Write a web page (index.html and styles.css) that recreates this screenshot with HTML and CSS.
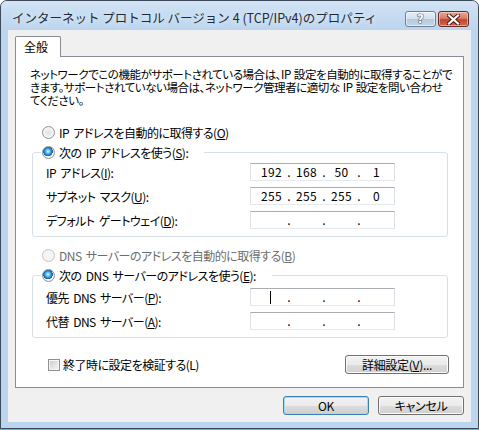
FILE: index.html
```html
<!DOCTYPE html>
<html lang="ja">
<head>
<meta charset="utf-8">
<title>IPv4 のプロパティ</title>
<link rel="stylesheet" href="styles.css">
</head>
<body>
<div class="window">
  <div class="titlebar">
    <span class="title">インターネット プロトコル バージョン 4 (TCP/IPv4)のプロパティ</span>
    <div class="tbtns">
      <div class="tbtn help"><span class="qmark">?</span></div>
      <div class="tbtn close">
        <svg width="13" height="11" viewBox="0 0 13 11">
          <path d="M2 1.5 L11 9.5 M11 1.5 L2 9.5" stroke="#4a1a12" stroke-width="4.2" stroke-linecap="square" fill="none"/>
          <path d="M2 1.5 L11 9.5 M11 1.5 L2 9.5" stroke="#ffffff" stroke-width="2.2" stroke-linecap="square" fill="none"/>
        </svg>
      </div>
    </div>
  </div>
  <div class="client">
    <div class="tabs"><div class="tab">全般</div></div>
    <div class="page">
      <p class="desc">ネットワークでこの機能がサポートされている場合は、IP 設定を自動的に取得することがで<br>きます。サポートされていない場合は、ネットワーク管理者に適切な IP 設定を問い合わせ<br>てください。</p>

      <div class="option first"><span class="radio"></span><span>IP アドレスを自動的に取得する(<u>O</u>)</span></div>

      <fieldset class="group g1">
        <legend><span class="radio checked"></span><span>次の IP アドレスを使う(<u>S</u>):</span></legend>
        <div class="rows">
          <div class="row"><span class="lbl">IP アドレス(<u>I</u>):</span>
            <div class="ip"><span class="seg">192</span><span class="dot">.</span><span class="seg">168</span><span class="dot">.</span><span class="seg">50</span><span class="dot">.</span><span class="seg">1</span></div></div>
          <div class="row"><span class="lbl">サブネット マスク(<u>U</u>):</span>
            <div class="ip"><span class="seg">255</span><span class="dot">.</span><span class="seg">255</span><span class="dot">.</span><span class="seg">255</span><span class="dot">.</span><span class="seg">0</span></div></div>
          <div class="row"><span class="lbl">デフォルト ゲートウェイ(<u>D</u>):</span>
            <div class="ip"><span class="seg"></span><span class="dot">.</span><span class="seg"></span><span class="dot">.</span><span class="seg"></span><span class="dot">.</span><span class="seg"></span></div></div>
        </div>
      </fieldset>

      <div class="option disabled dns-auto"><span class="radio"></span><span>DNS サーバーのアドレスを自動的に取得する(<u>B</u>)</span></div>

      <fieldset class="group g2">
        <legend><span class="radio checked"></span><span>次の DNS サーバーのアドレスを使う(<u>E</u>):</span></legend>
        <div class="rows">
          <div class="row"><span class="lbl">優先 DNS サーバー(<u>P</u>):</span>
            <div class="ip"><span class="seg caret-seg"><span class="caret"></span></span><span class="dot">.</span><span class="seg"></span><span class="dot">.</span><span class="seg"></span><span class="dot">.</span><span class="seg"></span></div></div>
          <div class="row"><span class="lbl">代替 DNS サーバー(<u>A</u>):</span>
            <div class="ip"><span class="seg"></span><span class="dot">.</span><span class="seg"></span><span class="dot">.</span><span class="seg"></span><span class="dot">.</span><span class="seg"></span></div></div>
        </div>
      </fieldset>

      <div class="bottom-row">
        <div class="check"><span class="box"></span><span>終了時に設定を検証する(L)</span></div>
        <button class="btn adv">詳細設定(<u>V</u>)...</button>
      </div>
    </div>
    <div class="actions">
      <button class="btn default">OK</button>
      <button class="btn">キャンセル</button>
    </div>
  </div>
</div>
</body>
</html>
```

FILE: styles.css
```css
html, body {
  margin: 0;
  padding: 0;
  background: #ffffff;
}

body {
  width: 479px;
  height: 430px;
  overflow: hidden;
  font-family: "Noto Sans CJK JP", "Noto Sans", sans-serif;
  font-size: 12px;
  color: #000;
  font-feature-settings: "palt";
  letter-spacing: -0.5px;
  word-spacing: 2px;
}

.window {
  box-sizing: border-box;
  width: 479px;
  height: 429px;
  border: 1px solid #3d4a59;
  border-radius: 7px 7px 0 0;
  background: #bcd5ee;
  box-shadow: 0 1px 0 #35c3e6;
  display: flex;
  flex-direction: column;
}

.titlebar {
  box-sizing: border-box;
  height: 29px;
  padding: 3px 9px 0 11px;
  display: flex;
  align-items: center;
  border-radius: 6px 6px 0 0;
  background: linear-gradient(#d3e4f5 0%, #c6dcf1 45%, #bcd5ee 100%);
}

.title {
  flex: 1;
  font-size: 12.5px;
  font-feature-settings: normal;
  letter-spacing: 0;
  word-spacing: 0;
  color: #1f2a36;
  white-space: nowrap;
  text-shadow: 0 0 6px rgba(255,255,255,0.9);
}

.tbtns {
  display: flex;
  gap: 2px;
  align-self: flex-start;
  margin-top: 7px;
}

.tbtn {
  box-sizing: border-box;
  width: 31px;
  height: 16px;
  border-radius: 3px;
  display: flex;
  align-items: center;
  justify-content: center;
}

.help {
  border: 1px solid #6e7f93;
  background: linear-gradient(#e6eef7 0%, #d3e0ee 48%, #b5c8dd 52%, #c2d5e9 100%);
  box-shadow: inset 0 0 0 1px rgba(255,255,255,0.55);
}

.qmark {
  font-family: "DejaVu Sans", sans-serif;
  font-weight: bold;
  font-size: 12px;
  line-height: 12px;
  letter-spacing: 0;
  color: #ffffff;
  -webkit-text-stroke: 0.6px #3b4d63;
  paint-order: stroke fill;
  text-shadow: 0 0 1px #3b4d63, 0 0 1px #3b4d63;
}

.close {
  border: 1px solid #6a2c22;
  background: linear-gradient(#e9a898 0%, #d77d69 45%, #c2452f 55%, #cf6a4f 100%);
  box-shadow: inset 0 0 0 1px rgba(255,225,215,0.5);
}

.close svg { display: block; }

.client {
  box-sizing: border-box;
  margin: 0 7px 0 7px;
  height: 392px;
  padding: 6px 7px 7px 7px;
  background: #f0f0f0;
  display: flex;
  flex-direction: column;
}

.tabs {
  display: flex;
  height: 20px;
}

.tab {
  box-sizing: border-box;
  height: 21px;
  width: 46px;
  padding-left: 8px;
  border: 1px solid #898c95;
  border-bottom: none;
  background: #ffffff;
  line-height: 20px;
  letter-spacing: 0;
  position: relative;
  z-index: 1;
  border-radius: 2px 2px 0 0;
}

.page {
  box-sizing: border-box;
  height: 332px;
  border: 1px solid #898c95;
  background: #ffffff;
  display: flex;
  flex-direction: column;
  align-items: flex-start;
}

.desc {
  margin: 11px 0 0 14px;
  font-size: 11.5px;
  line-height: 13px;
  white-space: nowrap;
  letter-spacing: -0.45px;
  word-spacing: 1px;
}

.option {
  display: flex;
  align-items: center;
  gap: 4px;
  height: 16px;
  margin-left: 26px;
  white-space: nowrap;
}

.option.first { margin-top: 17px; }
.option.dns-auto { margin-top: 10px; }
.option.disabled { color: #6d6d6d; }

.radio {
  box-sizing: border-box;
  width: 13px;
  height: 13px;
  border-radius: 50%;
  border: 1px solid #8e8f8f;
  background: radial-gradient(circle at 50% 50%, #e4e4e4 0, #eeeeee 40%, #f7f7f7 70%, #fdfdfd 100%);
  flex: none;
}

.radio.checked {
  background:
    radial-gradient(circle at 45% 40%, #d9f6ff 0, #7cd0f4 18%, #2c8fd6 36%, #185c9e 52%, transparent 56%),
    radial-gradient(circle at 50% 50%, #e4e4e4 0, #eeeeee 40%, #f7f7f7 70%, #fdfdfd 100%);
}

.disabled .radio {
  border-color: #c4c4c4;
  background: #f4f4f4;
}

.group {
  box-sizing: border-box;
  margin: 0 0 0 16px;
  padding: 0;
  width: 416px;
  min-width: 0;
  border: 1px solid #d5dfe5;
  border-radius: 3px;
}

.g1 { margin-top: 4px; }
.g2 { margin-top: 4px; }

.group legend {
  display: flex;
  align-items: center;
  gap: 4px;
  height: 16px;
  margin-left: 8px;
  padding: 0 16px 0 1px;
  white-space: nowrap;
}

.rows {
  display: flex;
  flex-direction: column;
  gap: 6px;
  padding: 3px 0 7px 0;
}

.g2 .rows { padding-top: 5px; }

.row {
  display: flex;
  align-items: center;
  height: 18px;
  padding-left: 13px;
  padding-right: 52px;
}

.lbl {
  flex: 1;
  white-space: nowrap;
}

.ip {
  box-sizing: border-box;
  width: 145px;
  height: 18px;
  border: 1px solid;
  border-color: #abadb3 #dbdfe6 #e3e9ef #e2e3ea;
  background: #ffffff;
  display: flex;
  align-items: center;
  padding-left: 5px;
  line-height: 16px;
  letter-spacing: 0.3px;
}

.seg {
  width: 31px;
  text-align: center;
  height: 16px;
  display: flex;
  align-items: center;
  justify-content: center;
}

.dot {
  width: 4px;
  text-align: center;
}

.caret {
  width: 1px;
  height: 13px;
  background: #000;
  margin-left: -2px;
}

.bottom-row {
  align-self: stretch;
  display: flex;
  align-items: center;
  justify-content: space-between;
  margin-top: 17px;
  padding: 0 14px 0 32px;
}

.check {
  display: flex;
  align-items: center;
  gap: 3px;
  white-space: nowrap;
}

.box {
  box-sizing: border-box;
  width: 12px;
  height: 12px;
  border: 1px solid #8e8f8f;
  background: linear-gradient(135deg, #c9c9c9 0%, #e6e6e6 60%, #f4f4f4 100%);
  box-shadow: inset 0 0 0 1px #f6f6f6;
}

.btn {
  box-sizing: border-box;
  height: 19px;
  border: 1px solid #707070;
  border-radius: 3px;
  background: linear-gradient(#f2f2f2 0%, #ebebeb 50%, #dddddd 51%, #cfcfcf 100%);
  box-shadow: inset 0 0 0 1px #fbfbfb;
  font-family: "Noto Sans CJK JP", "Noto Sans", sans-serif;
  font-size: 12px;
  font-feature-settings: "palt";
  letter-spacing: -0.3px;
  line-height: 16px;
  color: #000;
  padding: 0;
  margin: 0;
}

.adv { width: 104px; }

.actions {
  display: flex;
  justify-content: flex-end;
  gap: 9px;
  margin-top: 8px;
}

.actions .btn { width: 86px; }

.btn.default {
  border-color: #3c7fb1;
  box-shadow: inset 0 0 0 1px #9fdcf7;
}
```
